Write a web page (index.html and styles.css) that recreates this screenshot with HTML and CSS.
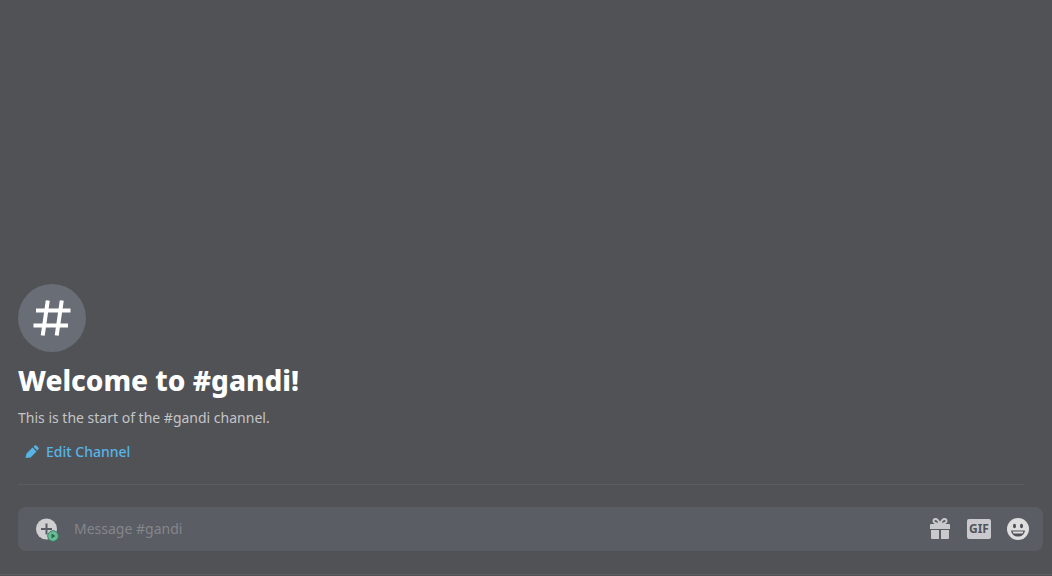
FILE: index.html
```html
<!DOCTYPE html>
<html lang="en">
<head>
<meta charset="utf-8">
<title>#gandi</title>
<meta name="viewport" content="width=device-width, initial-scale=1">
<link rel="stylesheet" href="styles.css">
</head>
<body>
<main class="chat">
  <section class="welcome">
    <div class="channel-icon">
      <svg viewBox="0 0 68 68" width="68" height="68" aria-hidden="true">
        <path d="M29.500 18.500L25 49.500M43.500 18.500L39 49.500M20 26.500H50.500M17.500 41.500H48" fill="none" stroke="currentColor" stroke-width="4" stroke-linecap="square"/>
      </svg>
    </div>
    <h1 class="title">Welcome to #gandi!</h1>
    <p class="subtitle">This is the start of the #gandi channel.</p>
    <button class="edit" type="button">
      <svg viewBox="0 0 16 16" width="16" height="16" aria-hidden="true">
        <path d="M1.500 14l1-4.500 6-6 4 4-6 6zM9.500 2.700l1.200-1.200q.8-.7 1.600.1l2 2q.8.8.1 1.600L13.300 6.500z" fill="currentColor"/>
      </svg>
      Edit Channel
    </button>
  </section>
  <form class="composer">
    <button class="tool" type="button" aria-label="Attach">
      <svg viewBox="0 0 24 26" width="24" height="26" aria-hidden="true">
        <circle cx="10.500" cy="13" r="10.500" fill="#cfcfd2"/>
        <path d="M10.500 7.500V18.500M5 13H16" stroke="#595c64" stroke-width="2"/>
        <circle cx="17" cy="20" r="5.300" fill="#69bd94" stroke="#397e68"/>
        <path d="M15.500 17.500v5l4-2.500z" fill="#28654e"/>
      </svg>
    </button>
    <input class="message" type="text" placeholder="Message #gandi" aria-label="Message #gandi">
    <div class="tools">
      <button class="tool" type="button" aria-label="Gift">
        <svg viewBox="0 0 22 22" width="22" height="22" aria-hidden="true">
          <path d="M2 6H20q1 0 1 1v4H1V7q0-1 1-1zM2 12H10V21H3q-1 0-1-1zM12 12H20v8q0 1-1 1H12z" fill="currentColor"/>
          <path d="M11 6Q9 1 6.500 1Q4.500 1 4.500 3Q4.500 5.500 11 6Q17.500 5.500 17.500 3Q17.500 1 15.500 1Q13 1 11 6" fill="none" stroke="currentColor" stroke-width="2"/>
        </svg>
      </button>
      <button class="tool gif" type="button">GIF</button>
      <button class="tool" type="button" aria-label="Emoji">
        <svg viewBox="0 0 22 22" width="22" height="22" aria-hidden="true">
          <circle cx="11" cy="11" r="11" fill="#dededf"/>
          <ellipse cx="7.500" cy="8" rx="1.500" ry="2.200" fill="#505157"/>
          <ellipse cx="14.500" cy="8" rx="1.500" ry="2.200" fill="#505157"/>
          <path d="M4 12.500H18Q17 18.500 11 18.500T4 12.500z" fill="#505157"/>
          <path d="M5.500 13.500H16.500L15.500 15.500H6.500z" fill="#dededf"/>
        </svg>
      </button>
    </div>
  </form>
</main>
</body>
</html>
```
FILE: styles.css
```css
* { box-sizing: border-box; }
body {
  margin: 0;
  padding-bottom: 1px;
  background: #515256;
  color: #c4c5c7;
  font: 14px/20px "Noto Sans", "Open Sans", sans-serif;
}
button {
  border: 0;
  padding: 0;
  background: none;
  color: inherit;
  font: inherit;
  cursor: pointer;
}
svg { display: block; }
.chat {
  min-height: calc(100vh - 1px);
  display: flex;
  flex-direction: column;
  justify-content: flex-end;
  padding: 0 9px 23px 18px;
  border-bottom: 1px solid #5b5b62;
}
.welcome {
  margin-right: 18px;
  padding-bottom: 20px;
  border-bottom: 1px solid #5b5c62;
}
.channel-icon {
  width: 68px;
  border-radius: 50%;
  background: #696d75;
  color: #fff;
}
.title {
  margin: 8px 0;
  color: #fff;
  font: 800 28px/40px "Noto Sans", "Open Sans", sans-serif;
}
.subtitle {
  margin: 0;
}
.edit {
  display: flex;
  align-items: center;
  gap: 6px;
  margin-top: 12px;
  padding: 2px 6px;
  color: #57b4e6;
  font-weight: 500;
}
.composer {
  display: flex;
  align-items: center;
  height: 44px;
  margin-top: 22px;
  padding: 0 14px 0 18px;
  border-radius: 8px;
  background: #5a5d64;
}
.message {
  flex: 1;
  min-width: 0;
  margin: 0 14px;
  padding: 0;
  border: 0;
  outline: 0;
  background: none;
  color: #dededf;
  font: inherit;
}
.message::placeholder { color: #85868b; opacity: 1; }
.tools {
  display: flex;
  align-items: center;
  gap: 16px;
  color: #cacace;
}
.gif {
  width: 24px;
  border-radius: 2px;
  background: #cacace;
  color: #515359;
  font-size: 12px;
  font-weight: 700;
}
```
